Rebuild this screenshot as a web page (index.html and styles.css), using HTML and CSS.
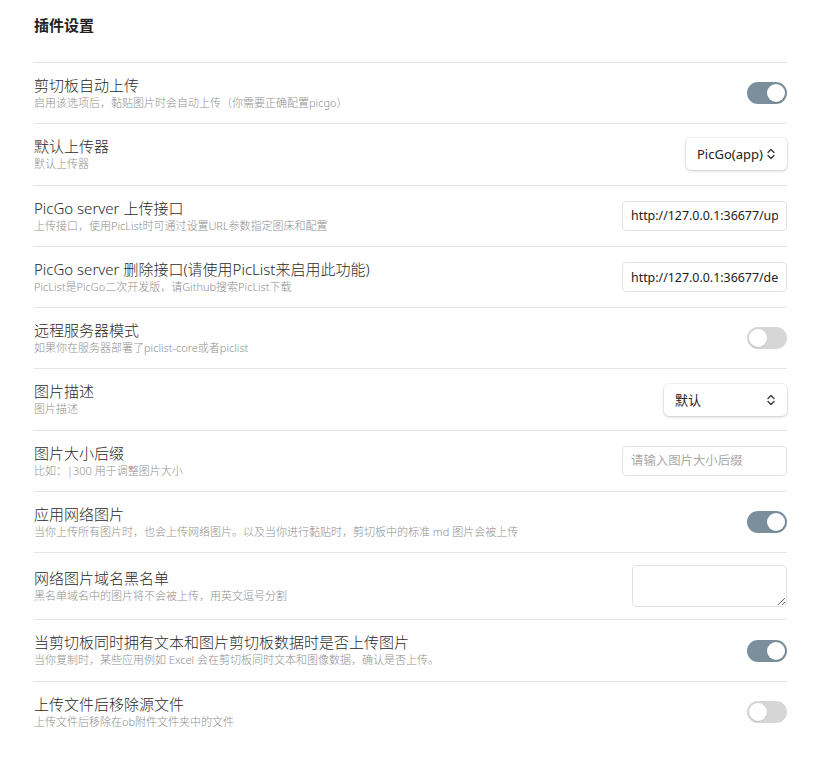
FILE: index.html
```html
<!DOCTYPE html>
<html lang="zh-CN">
<head>
    <meta charset="UTF-8">
    <meta name="viewport" content="width=device-width, initial-scale=1.0">
    <title>插件设置</title>
    <link rel="stylesheet" href="styles.css">
</head>
<body>
    <div class="settings">
        <h3 class="settings-title">插件设置</h3>

        <div class="setting-item">
            <div class="setting-info">
                <div class="setting-name">剪切板自动上传</div>
                <div class="setting-desc">启用该选项后，黏贴图片时会自动上传（你需要正确配置picgo）</div>
            </div>
            <div class="toggle on"><span class="knob"></span></div>
        </div>

        <div class="setting-item">
            <div class="setting-info">
                <div class="setting-name">默认上传器</div>
                <div class="setting-desc">默认上传器</div>
            </div>
            <div class="dropdown dropdown-uploader">
                <span>PicGo(app)</span>
                <svg class="chevrons" viewBox="0 0 10 12" width="10" height="12"><path d="M2 4.5 L5 1.5 L8 4.5 M2 7.5 L5 10.5 L8 7.5" fill="none" stroke="#333" stroke-width="1.3" stroke-linecap="round" stroke-linejoin="round"/></svg>
            </div>
        </div>

        <div class="setting-item">
            <div class="setting-info">
                <div class="setting-name">PicGo server 上传接口</div>
                <div class="setting-desc">上传接口，使用PicList时可通过设置URL参数指定图床和配置</div>
            </div>
            <input class="text-input" type="text" value="http://127.0.0.1:36677/upload">
        </div>

        <div class="setting-item">
            <div class="setting-info">
                <div class="setting-name">PicGo server 删除接口(请使用PicList来启用此功能)</div>
                <div class="setting-desc">PicList是PicGo二次开发版，请Github搜索PicList下载</div>
            </div>
            <input class="text-input" type="text" value="http://127.0.0.1:36677/delete">
        </div>

        <div class="setting-item">
            <div class="setting-info">
                <div class="setting-name">远程服务器模式</div>
                <div class="setting-desc">如果你在服务器部署了piclist-core或者piclist</div>
            </div>
            <div class="toggle"><span class="knob"></span></div>
        </div>

        <div class="setting-item">
            <div class="setting-info">
                <div class="setting-name">图片描述</div>
                <div class="setting-desc">图片描述</div>
            </div>
            <div class="dropdown dropdown-desc">
                <span>默认</span>
                <svg class="chevrons" viewBox="0 0 10 12" width="10" height="12"><path d="M2 4.5 L5 1.5 L8 4.5 M2 7.5 L5 10.5 L8 7.5" fill="none" stroke="#333" stroke-width="1.3" stroke-linecap="round" stroke-linejoin="round"/></svg>
            </div>
        </div>

        <div class="setting-item">
            <div class="setting-info">
                <div class="setting-name">图片大小后缀</div>
                <div class="setting-desc">比如：|300 用于调整图片大小</div>
            </div>
            <input class="text-input" type="text" placeholder="请输入图片大小后缀">
        </div>

        <div class="setting-item">
            <div class="setting-info">
                <div class="setting-name">应用网络图片</div>
                <div class="setting-desc">当你上传所有图片时，也会上传网络图片。以及当你进行黏贴时，剪切板中的标准 md 图片会被上传</div>
            </div>
            <div class="toggle on"><span class="knob"></span></div>
        </div>

        <div class="setting-item">
            <div class="setting-info">
                <div class="setting-name">网络图片域名黑名单</div>
                <div class="setting-desc">黑名单域名中的图片将不会被上传，用英文逗号分割</div>
            </div>
            <textarea class="text-area"></textarea>
        </div>

        <div class="setting-item">
            <div class="setting-info">
                <div class="setting-name">当剪切板同时拥有文本和图片剪切板数据时是否上传图片</div>
                <div class="setting-desc">当你复制时，某些应用例如 Excel 会在剪切板同时文本和图像数据，确认是否上传。</div>
            </div>
            <div class="toggle on"><span class="knob"></span></div>
        </div>

        <div class="setting-item">
            <div class="setting-info">
                <div class="setting-name">上传文件后移除源文件</div>
                <div class="setting-desc">上传文件后移除在ob附件文件夹中的文件</div>
            </div>
            <div class="toggle"><span class="knob"></span></div>
        </div>
    </div>
</body>
</html>
```

FILE: styles.css
```css
body {
    margin: 0;
    background-color: #fff;
    font-family: "Segoe UI", "Noto Sans", "Noto Sans CJK SC", sans-serif;
    color: #222;
}
.settings {
    padding: 15px 35px 20px 34px;
}
.settings-title {
    margin: 0 0 27px;
    font-size: 15px;
    line-height: 20px;
    font-weight: bold;
    color: #222;
}
.setting-item {
    display: flex;
    align-items: center;
    gap: 20px;
    padding: 12px 0;
    border-top: 1px solid #e4e4e4;
}
.setting-info {
    flex: 1;
    min-width: 0;
}
.setting-name {
    font-size: 15px;
    line-height: 20px;
    font-weight: 300;
    color: #2a2a2a;
}
.setting-desc {
    font-size: 11px;
    line-height: 16.3px;
    font-weight: 300;
    color: #8f8f8f;
}
.toggle {
    width: 40px;
    height: 22px;
    border-radius: 11px;
    background-color: #d6d6d6;
    display: flex;
    align-items: center;
    padding: 0 2px;
    box-sizing: border-box;
    flex-shrink: 0;
}
.toggle.on {
    background-color: #7a8f9b;
    justify-content: flex-end;
}
.knob {
    width: 18px;
    height: 18px;
    border-radius: 50%;
    background-color: #fff;
    box-shadow: 0 1px 1px rgba(0,0,0,0.1);
}
.dropdown {
    height: 32px;
    box-sizing: border-box;
    display: flex;
    align-items: center;
    justify-content: space-between;
    padding: 0 11px 0 11px;
    border-radius: 5px;
    background-color: #fff;
    box-shadow: 0 1px 3px rgba(0,0,0,0.18), 0 0 0 1px rgba(0,0,0,0.04);
    font-size: 13px;
    color: #222;
    flex-shrink: 0;
}
.dropdown-uploader {
    width: 101px;
}
.dropdown-desc {
    width: 123px;
}
.text-input {
    width: 165px;
    height: 30px;
    box-sizing: border-box;
    padding: 0 8px;
    border: 1px solid #e2e2e2;
    border-radius: 4px;
    font-family: inherit;
    font-size: 12.4px;
    color: #222;
    background-color: #fff;
    outline: none;
    flex-shrink: 0;
}
.text-input::placeholder {
    color: #aaa;
}
.text-area {
    width: 155px;
    height: 42px;
    box-sizing: border-box;
    border: 1px solid #e2e2e2;
    border-radius: 4px;
    font-family: inherit;
    font-size: 13px;
    flex-shrink: 0;
    outline: none;
}
```
